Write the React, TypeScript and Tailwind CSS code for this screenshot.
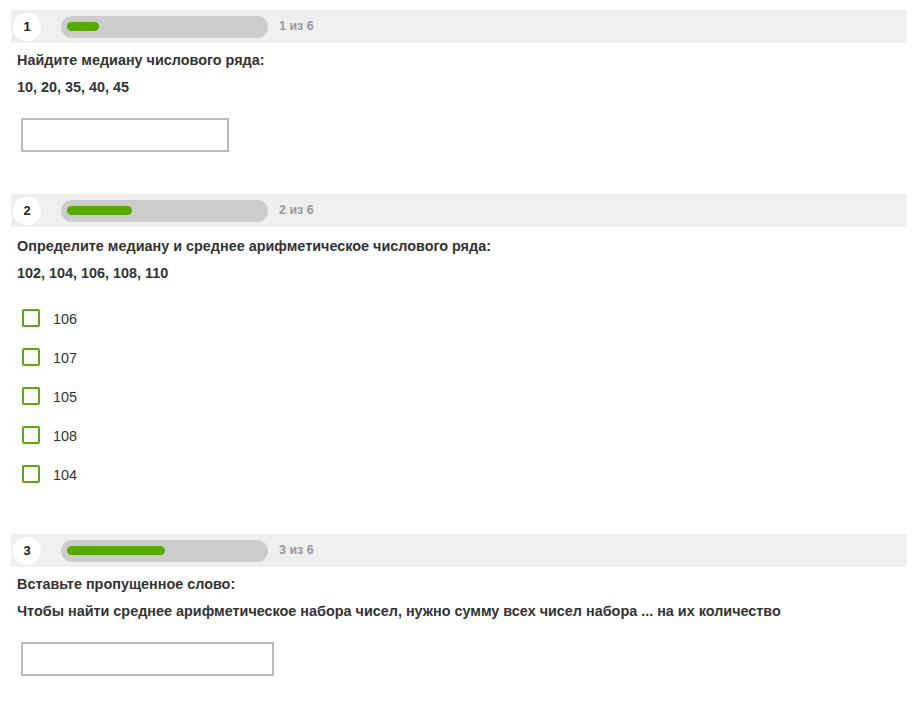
const QUESTIONS = [
  { n: 1, title: "Найдите медиану числового ряда:", body: "10, 20, 35, 40, 45", kind: "input", width: "w-[208px]" },
  {
    n: 2,
    title: "Определите медиану и среднее арифметическое числового ряда:",
    body: "102, 104, 106, 108, 110",
    kind: "check",
    options: ["106", "107", "105", "108", "104"],
  },
  {
    n: 3,
    title: "Вставьте пропущенное слово:",
    body: "Чтобы найти среднее арифметическое набора чисел, нужно сумму всех чисел набора ... на их количество",
    kind: "input",
    width: "w-[253px]",
  },
];

function Header({ n }: { n: number }) {
  return (
    <div className="ml-[11px] mr-[13px] h-[33px] bg-[#efefef] flex items-center">
      <div className="ml-[2px] w-[28px] h-[28px] rounded-full bg-white flex items-center justify-center text-[13px] font-bold text-[#222]">
        {n}
      </div>
      <div className="ml-[20px] w-[207px] h-[22px] rounded-full bg-[#cccccc] flex items-center px-[6px]">
        {/* ширина заливки зависит от номера вопроса */}
        <div className="h-[9px] rounded-full bg-[#57a900]" style={{ width: `${(n / 6) * 100}%` }} />
      </div>
      <span className="ml-[11px] text-[12.5px] font-bold text-[#9a9a9a]">{n} из 6</span>
    </div>
  );
}

export default function App() {
  return (
    <div className="w-[920px] h-[713px] bg-white overflow-hidden pt-[10px] text-[#333]" style={{ fontFamily: '"Liberation Sans", Arial, sans-serif' }}>
      {QUESTIONS.map((q, i) => (
        <div key={q.n} className={i === 0 ? "" : i === 1 ? "mt-[42px]" : "mt-[51px]"}>
          <Header n={q.n} />
          <div className="px-[17px]">
            <p className={`text-[14.4px] leading-[20px] font-bold ${i === 1 ? "mt-[9px]" : "mt-[7px]"}`}>{q.title}</p>
            <p className="mt-[7px] text-[14.4px] leading-[20px] font-bold">{q.body}</p>
            {q.kind === "input" ? (
              <div className={`mt-[21px] ml-[4px] h-[34px] border-2 border-[#bbbbbb] bg-white ${q.width}`} />
            ) : (
              <div className="mt-[26px] ml-[5px] flex flex-col gap-[21px]">
                {q.options!.map((o) => (
                  <label key={o} className="flex items-center h-[18px]">
                    <span className="w-[18px] h-[18px] border-2 border-[#5aaa0a] rounded-[2px] bg-white" />
                    <span className="ml-[13px] text-[14.4px] text-[#333] mt-[3px]">{o}</span>
                  </label>
                ))}
              </div>
            )}
          </div>
        </div>
      ))}
    </div>
  );
}
